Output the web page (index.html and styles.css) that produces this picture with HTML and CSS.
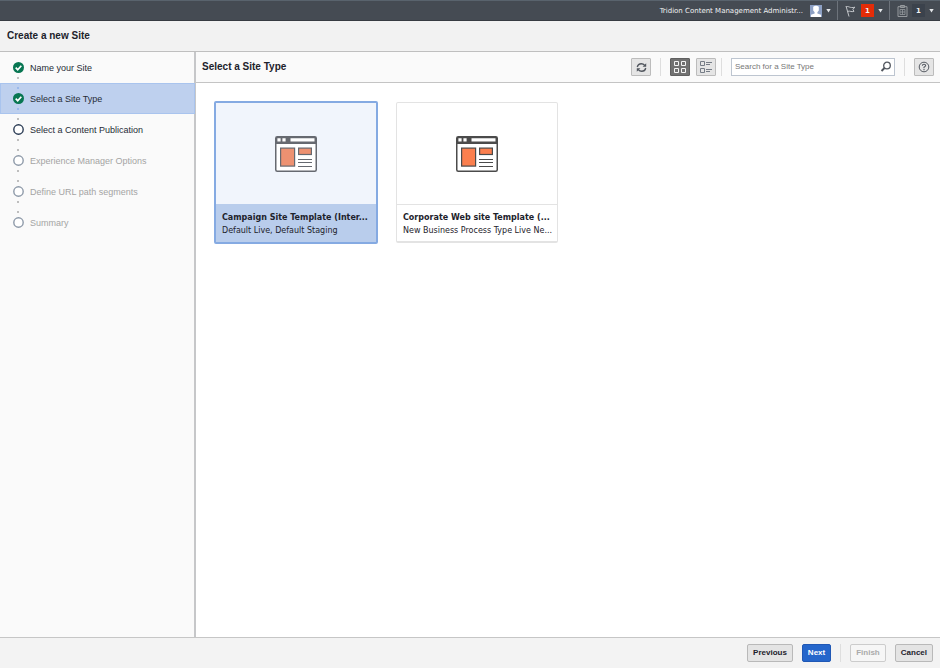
FILE: index.html
```html
<!DOCTYPE html>
<html lang="en">
<head>
<meta charset="utf-8">
<title>Create a new Site</title>
<link rel="stylesheet" href="styles.css">
</head>
<body>
<svg class="defs" aria-hidden="true">
  <symbol id="check" viewBox="0 0 11 11"><circle cx="5.5" cy="5.5" r="5.5" fill="#087652"/><path d="M2.7 5.7l2 2 3.6-4" fill="none" stroke="#fff" stroke-width="1.7"/></symbol>
  <symbol id="ring" viewBox="0 0 11 11"><circle cx="5.5" cy="5.5" r="4.7" fill="#fff" stroke="currentColor" stroke-width="1.4"/></symbol>
  <symbol id="caret" viewBox="0 0 5 4"><path d="M.3 0h4.400L2.500 3.600z" fill="#e4e7ea"/></symbol>
  <symbol id="site" viewBox="0 0 42 36">
    <rect x=".75" y=".75" width="40.5" height="34.5" rx="1.5" fill="#fff" stroke="currentColor" stroke-width="1.5"/>
    <path d="M1 1h40v7H1z" fill="currentColor"/>
    <path d="M2.400 2.300h3.200v3.300H2.400zM7.400 2.300h3.200v3.300H7.400zM15.500 2.300h24v3.300h-24z" fill="#fff"/>
    <rect x="5.6" y="12.1" width="14" height="18" class="fill" stroke="currentColor" stroke-width="1.2"/>
    <rect x="23.6" y="12.1" width="12.8" height="6.4" class="fill" stroke="currentColor" stroke-width="1.2"/>
    <path d="M23 23.5h14M23 26.500h14M23 30.5h14" stroke="currentColor" stroke-width="1.1"/>
  </symbol>
</svg>
<header class="topbar">
  <button class="menu account">
    <span>Tridion Content Management Administr...</span>
    <svg width="12" height="12" viewBox="0 0 12 12"><path d="M0 0h12v12H0z" fill="#8da0c4"/><path d="M3.2 1.8Q6-.2 8.8 1.8v3.7L7.4 7.2v1.2l3.6 1.4V12H1V9.8l3.6-1.4V7.2L3.2 5.5z" fill="#fff"/></svg>
    <svg width="5" height="4"><use href="#caret"/></svg>
  </button>
  <button class="menu" aria-label="Notifications">
    <svg width="12" height="12" viewBox="0 0 12 12"><path d="M1 1l3 10.5M1.3 1.7c3-.8 3 1.8 8.7.5L7.8 4.3l1.2 2C6 7.4 5.600 5.600 2.700 6.300" fill="none" stroke="#c3c6ca"/></svg>
    <span class="badge alert">1</span>
    <svg width="5" height="4"><use href="#caret"/></svg>
  </button>
  <button class="menu" aria-label="Tasks">
    <svg width="11" height="12" viewBox="0 0 11 12"><path d="M3.500 1.700H1v9.800h9V1.700H7.500" fill="none" stroke="#969a9e"/><path d="M3.500.5h4v2h-4z" fill="#777c81" stroke="#969a9e"/><path d="M3 4.500h5v5H3zM3 7h5M5.500 4.500v5" fill="none" stroke="#969a9e" stroke-width=".8"/></svg>
    <span class="badge">1</span>
    <svg width="5" height="4"><use href="#caret"/></svg>
  </button>
</header>
<h1 class="title">Create a new Site</h1>
<div class="body">
  <nav class="steps">
    <ol>
      <li class="done"><svg width="11" height="11"><use href="#check"/></svg>Name your Site</li>
      <li class="current"><svg width="11" height="11"><use href="#check"/></svg>Select a Site Type</li>
      <li class="next"><svg width="11" height="11"><use href="#ring"/></svg>Select a Content Publication</li>
      <li><svg width="11" height="11"><use href="#ring"/></svg>Experience Manager Options</li>
      <li><svg width="11" height="11"><use href="#ring"/></svg>Define URL path segments</li>
      <li><svg width="11" height="11"><use href="#ring"/></svg>Summary</li>
    </ol>
  </nav>
  <main class="content">
    <div class="toolbar">
      <h2>Select a Site Type</h2>
      <button class="tool" aria-label="Refresh"><svg width="11" height="11" viewBox="0 0 11 11"><path d="M1.300 5Q2 1.700 5.300 1.700 7.300 1.700 8.700 3.400M9.700 6Q9 9.300 5.700 9.300 3.700 9.300 2.300 7.600" fill="none" stroke="#51565e" stroke-width="1.4"/><path d="M10.200 1.200v3.600H6.600zM.8 9.800V6.200h3.600z" fill="#51565e"/></svg></button>
      <span class="rule"></span>
      <span class="views">
        <button class="tool pressed" aria-label="Tile view"><svg width="12" height="12" viewBox="0 0 12 12"><path d="M.5.5h4v4h-4zM7.500.5h4v4h-4zM.5 7.500h4v4h-4zM7.500 7.500h4v4h-4z" fill="none" stroke="#f4f4f4"/></svg></button>
        <button class="tool" aria-label="List view"><svg width="12" height="12" viewBox="0 0 12 12"><path d="M.5.5h4v4h-4zM.5 7.500h4v4h-4zM6 1.500h6M6 3.500h4M6 8.500h6M6 10.500h4" fill="none" stroke="#757c86"/></svg></button>
      </span>
      <span class="rule narrow"></span>
      <form class="search">
        <input type="text" aria-label="Search for a Site Type" placeholder="Search for a Site Type">
        <button type="button" aria-label="Search"><svg width="12" height="12" viewBox="0 0 12 12"><circle cx="7" cy="4.500" r="3.300" fill="none" stroke="#51565e" stroke-width="1.300"/><path d="M4.500 7L1.500 10" stroke="#51565e" stroke-width="2"/></svg></button>
      </form>
      <span class="rule"></span>
      <button class="tool" aria-label="Help"><svg width="12" height="12" viewBox="0 0 12 12"><circle cx="6" cy="6" r="4.800" fill="none" stroke="#555a62"/><path d="M4.300 4.800Q4.400 3.200 6 3.200T7.700 4.600Q7.700 5.400 6 6.300v.9M6 8v1.200" fill="none" stroke="#555a62" stroke-width="1.100"/></svg></button>
    </div>
    <div class="cards">
      <button class="card selected">
        <span class="preview"><svg width="42" height="36"><use href="#site"/></svg></span>
        <span class="label"><strong>Campaign Site Template (Inter...</strong><span>Default Live, Default Staging</span></span>
      </button>
      <button class="card">
        <span class="preview"><svg width="42" height="36"><use href="#site"/></svg></span>
        <span class="label"><strong>Corporate Web site Template (...</strong><span>New Business Process Type Live Ne...</span></span>
      </button>
    </div>
  </main>
</div>
<footer class="actions">
  <button>Previous</button>
  <button class="primary">Next</button>
  <span class="rule"></span>
  <button disabled>Finish</button>
  <button>Cancel</button>
</footer>
</body>
</html>
```
FILE: styles.css
```css
* { box-sizing: border-box; }
body {
  margin: 0;
  min-height: 100vh;
  display: flex;
  flex-direction: column;
  background: #fff;
  color: #1d222b;
  font: 9px/12px "Liberation Sans", Arial, sans-serif;
}
button, input { font: inherit; color: inherit; margin: 0; padding: 0; }
svg { display: block; flex: none; }
.defs { position: absolute; width: 0; height: 0; }
.topbar {
  display: flex;
  justify-content: flex-end;
  height: 21px;
  background: #454b53;
  border-top: 1px solid #59636d;
  border-bottom: 1px solid #373b42;
}
.menu {
  display: flex;
  align-items: center;
  gap: 4px;
  padding: 0 6px 0 7px;
  border: 0;
  border-left: 1px solid #6d737b;
  background: none;
  color: #f0f1f2;
  font: 7px/12px "DejaVu Sans", Verdana, sans-serif;
}
.account { border-left: 0; }
.account span { margin-right: 3px; }
.badge {
  width: 13px;
  height: 13px;
  background: #3b424c;
  font-weight: bold;
  line-height: 15px;
  text-align: center;
}
.alert { background: #e52c08; }
.title {
  margin: 0;
  padding: 9px 7px;
  background: #f2f2f2;
  border-bottom: 1px solid #bfbfbf;
  font-size: 10px;
  line-height: 12px;
}
.body { flex: 1; display: flex; }
.steps {
  flex: none;
  width: 196px;
  background: #fafafa;
  border-right: 2px solid #c6c7c9;
}
.steps ol { list-style: none; margin: 0; padding: 0; }
.steps li {
  position: relative;
  display: flex;
  align-items: center;
  gap: 6px;
  height: 31px;
  padding-left: 13px;
  color: #a4a4a4;
}
.steps svg { color: #8d99a8; }
.steps .done, .steps .current, .steps .next { color: #262c36; }
.steps .next svg { color: #2a3b54; }
.steps li::before, .steps li::after {
  content: "";
  position: absolute;
  left: 17px;
  width: 2px;
  height: 2px;
  border-radius: 1px;
  background: #aaa;
}
.steps li::before { top: 4px; }
.steps li::after { bottom: 4px; }
.steps li:first-child::before, .steps li:last-child::after { display: none; }
.steps .current {
  margin-right: -1px;
  background: #bed0ee;
  box-shadow: inset 0 0 0 1px #a9c4ee;
}
.steps .current::before, .steps .current::after { background: #8fb2ea; }
.content { flex: 1; min-width: 0; }
.toolbar {
  display: flex;
  align-items: center;
  height: 31px;
  padding: 0 6px;
  background: #fafafa;
  border-bottom: 1px solid #c4c4c4;
}
.toolbar h2 { flex: 1; margin: 0; font-size: 10px; line-height: 12px; }
.tool {
  display: grid;
  place-items: center;
  width: 20px;
  height: 18px;
  border: 1px solid #bcbcbc;
  border-radius: 1px;
  background: #e5e5e5;
}
.pressed { background: #717171; border-color: #606060; }
.views { display: flex; gap: 6px; }
.rule { width: 1px; height: 18px; margin: 0 9px; background: #dedede; }
.toolbar .narrow { margin-left: 5px; }
.search {
  display: flex;
  align-items: center;
  width: 164px;
  height: 18px;
  border: 1px solid #bdc5d0;
  background: #fff;
}
.search input {
  flex: 1;
  min-width: 0;
  padding: 0 3px;
  border: 0;
  background: none;
  font-size: 8px;
}
.search input::placeholder { color: #777; opacity: 1; }
.search button { padding: 0 2px; border: 0; background: none; }
.cards { display: flex; flex-wrap: wrap; gap: 17px; padding: 18px; }
.card {
  display: flex;
  flex-direction: column;
  width: 162px;
  margin: 1px;
  border: 1px solid #e3e3e3;
  border-bottom-width: 2px;
  border-radius: 2px;
  background: #fff;
  text-align: left;
  color: #1d222b;
}
.preview { display: grid; place-items: center; width: 100%; height: 101px; }
.preview svg { color: #4b4b4b; --fill: #fb7f4e; }
.fill { fill: var(--fill); }
.label {
  width: 100%;
  padding: 6px 4px 4px 6px;
  border-top: 1px solid #e3e3e3;
  font: 8px/13px "DejaVu Sans", Verdana, sans-serif;
  white-space: nowrap;
}
.label strong, .label span { display: block; }
.selected { width: 164px; margin: 0; border: 2px solid #85aae2; background: #f1f5fc; }
.selected .preview svg { color: #666970; --fill: #ed9171; }
.selected .label { flex: 1; background: #b9cdec; border-color: #b9cdec; }
.actions {
  display: flex;
  align-items: center;
  justify-content: flex-end;
  gap: 9px;
  height: 31px;
  padding: 0 7px;
  background: #f3f3f3;
  border-top: 1px solid #c6c6c6;
}
.actions button {
  height: 18px;
  padding: 0 5px;
  border: 1px solid #b9b9b9;
  border-radius: 2px;
  background: #e4e4e4;
  font-size: 8px;
  font-weight: bold;
}
.actions .primary { background: #2566cb; border-color: #2058b5; color: #fff; }
.actions button:disabled { background: #f6f6f6; border-color: #ccc; color: #aaa; }
.actions .rule { margin: 0; }
```
